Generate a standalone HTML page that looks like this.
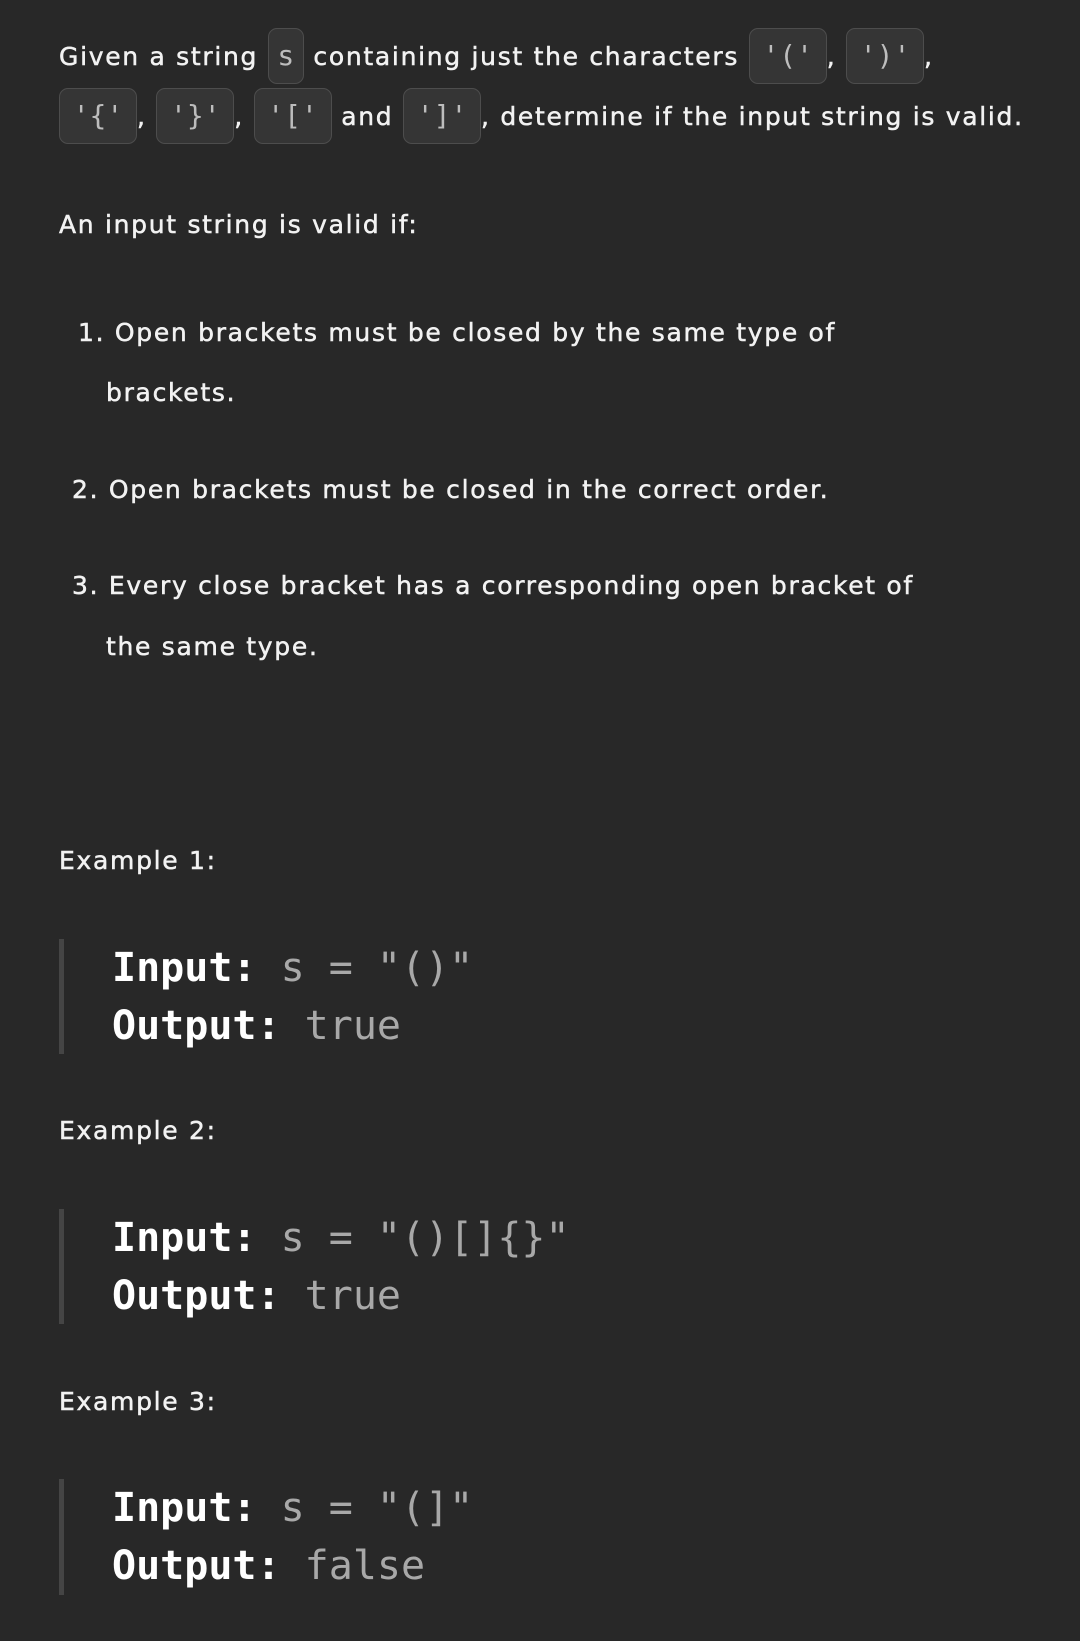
<!DOCTYPE html>
<html><head><meta charset="utf-8"><style>
html,body{margin:0;padding:0;background:#282828;}
body{width:1080px;height:1641px;position:relative;overflow:hidden;font-family:"DejaVu Sans","Liberation Sans",sans-serif;color:#f2f2f2;font-size:25px;letter-spacing:1.7px;-webkit-text-stroke:0.5px #f2f2f2;}
.l{position:absolute;left:59px;height:60px;line-height:60px;white-space:nowrap;}
.c{display:inline-block;box-sizing:border-box;height:56px;line-height:54px;vertical-align:middle;background:#353535;border:1.5px solid #4d4d4d;border-radius:9px;font-family:"DejaVu Sans Mono","Liberation Mono",monospace;font-size:28px;letter-spacing:0;-webkit-text-stroke:0;color:#bdbdbd;text-align:center;position:relative;top:-2px;}
.w{width:78px;}
.bar{position:absolute;left:59px;width:5px;background:#454545;}
.m{position:absolute;left:112px;font-family:"DejaVu Sans Mono","Liberation Mono",monospace;font-size:40px;letter-spacing:0;-webkit-text-stroke:0;height:58px;line-height:58px;white-space:pre;}
.m b{color:#fff;}
.m span{color:#a8a8a8;}
</style></head><body>
<div class="l" style="top:27px">Given a string <span class="c" style="width:36px">s</span> containing just the characters <span class="c w">'('</span>, <span class="c w">')'</span>,</div>
<div class="l" style="top:87px"><span class="c w">'{'</span>, <span class="c w">'}'</span>, <span class="c w">'['</span> and <span class="c w">']'</span>, determine if the input string is valid.</div>
<div class="l" style="top:195px">An input string is valid if:</div>
<div class="l" style="top:303px;left:78px">1. Open brackets must be closed by the same type of</div>
<div class="l" style="top:363px;left:106px">brackets.</div>
<div class="l" style="top:460px;left:72px">2. Open brackets must be closed in the correct order.</div>
<div class="l" style="top:556px;left:72px">3. Every close bracket has a corresponding open bracket of</div>
<div class="l" style="top:617px;left:106px">the same type.</div>
<div class="l" style="top:831px">Example 1:</div>
<div class="bar" style="top:939px;height:115px"></div>
<div class="m" style="top:939px"><b>Input:</b> <span>s = "()"</span></div>
<div class="m" style="top:997px"><b>Output:</b> <span>true</span></div>
<div class="l" style="top:1101px">Example 2:</div>
<div class="bar" style="top:1209px;height:115px"></div>
<div class="m" style="top:1209px"><b>Input:</b> <span>s = "()[]{}"</span></div>
<div class="m" style="top:1267px"><b>Output:</b> <span>true</span></div>
<div class="l" style="top:1372px">Example 3:</div>
<div class="bar" style="top:1479px;height:116px"></div>
<div class="m" style="top:1479px"><b>Input:</b> <span>s = "(]"</span></div>
<div class="m" style="top:1537px"><b>Output:</b> <span>false</span></div>
</body></html>
